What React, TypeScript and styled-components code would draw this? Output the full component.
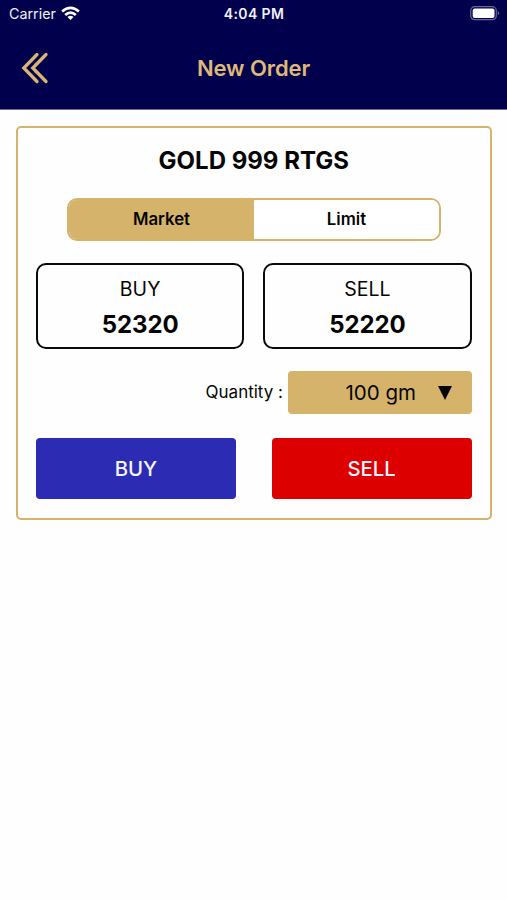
import React, { useState } from "react";
import styled, { createGlobalStyle } from "styled-components";

const GOLD = "#d6b36a";
const NAVY = "#00004c";

const GlobalStyle = createGlobalStyle`
  *, *::before, *::after { box-sizing: border-box; }
  body {
    margin: 0;
    background: #fefefe;
    color: #050505;
    font-family: Inter, "Liberation Sans", sans-serif;
  }
  button { font: inherit; color: inherit; border: 0; padding: 0; margin: 0; cursor: pointer; }
`;

const Screen = styled.div`
  min-height: 900px;
  display: flex;
  flex-direction: column;
`;

const Header = styled.header`
  height: 110px;
  background: ${NAVY};
  border-bottom: 1px solid #6c6a94;
`;

const StatusBar = styled.div`
  height: 27px;
  display: grid;
  grid-template-columns: 1fr auto 1fr;
  align-items: center;
  padding: 0 7px 0 9px;
  color: #f1f1fa;
  font-size: 14.3px;
`;

const Carrier = styled.div`
  display: flex;
  align-items: center;
  gap: 5px;
`;

const Clock = styled.div`
  font-weight: 600;
  font-size: 14px;
  letter-spacing: 0.4px;
  margin-right: 1px;
`;

const Battery = styled.div`
  display: flex;
  justify-content: flex-end;
`;

const NavBar = styled.div`
  height: 82px;
  display: grid;
  grid-template-columns: 80px 1fr 80px;
  align-items: center;
`;

const BackButton = styled.button`
  display: flex;
  width: 30px;
  margin-left: 20px;
  background: none;
`;

const Title = styled.h1`
  margin: 0;
  text-align: center;
  color: #deb979;
  font-size: 22px;
  font-weight: 600;
  letter-spacing: -0.1px;
`;

const Card = styled.main`
  margin: 16px 15px 0 16px;
  height: 394px;
  border: 2px solid ${GOLD};
  border-radius: 5px;
  padding: 0 18.5px 0 18px;
`;

const Instrument = styled.h2`
  margin: 17px 0 0;
  height: 30px;
  line-height: 31px;
  text-align: center;
  font-size: 24px;
  font-weight: 700;
  letter-spacing: 0;
`;

const Segments = styled.div`
  margin: 23px 30.5px 0 31px;
  height: 43px;
  display: grid;
  grid-template-columns: 1fr 1fr;
  border: 2px solid ${GOLD};
  border-radius: 10px;
  overflow: hidden;
`;

const Segment = styled.button<{ $active: boolean }>`
  background: ${(p) => (p.$active ? GOLD : "#fff")};
  padding-bottom: 1px;
  font-size: 16.8px;
  font-weight: 600;
`;

const Prices = styled.div`
  margin-top: 22px;
  display: grid;
  grid-template-columns: 1fr 1fr;
  gap: 19px;
`;

const PriceBox = styled.div`
  height: 86px;
  border: 2.5px solid #0a0a0a;
  border-radius: 10px;
  display: flex;
  flex-direction: column;
  align-items: center;
  padding-top: 12px;
`;

const PriceLabel = styled.span`
  font-size: 19.5px;
  line-height: 24px;
`;

const PriceValue = styled.span`
  margin-top: 9px;
  font-size: 24px;
  line-height: 30px;
  font-weight: 700;
  letter-spacing: -0.1px;
`;

const QuantityRow = styled.div`
  margin-top: 22px;
  display: flex;
  justify-content: flex-end;
  align-items: center;
  gap: 5px;
  font-size: 17px;
`;

const QuantityLabel = styled.span`
  padding-bottom: 1px;
`;

const QuantitySelect = styled.button`
  width: 183.5px;
  height: 43px;
  display: grid;
  grid-template-columns: 1fr 14px;
  column-gap: 18px;
  align-items: center;
  padding: 0 20px 0 54px;
  border-radius: 4px;
  background: ${GOLD};
  font-size: 20.5px;
  white-space: nowrap;
`;

const Actions = styled.div`
  margin-top: 24px;
  display: grid;
  grid-template-columns: 1fr 1fr;
  gap: 36px;
`;

const ActionButton = styled.button<{ $tone: string }>`
  height: 61px;
  border-radius: 4px;
  background: ${(p) => p.$tone};
  color: #f7f4ff;
  font-size: 20.3px;
  font-weight: 500;
`;

const quotes = [
  { label: "BUY", price: 52320 },
  { label: "SELL", price: 52220 },
];

function WifiIcon() {
  return (
    <svg width="19" height="15" viewBox="0 0 19 15" fill="none" stroke="#fff" strokeWidth="2.7">
      <path d="M1.1 5.5Q9.5 -1.7 17.9 5.5" />
      <path d="M4.2 9Q9.5 4.3 14.8 9" />
      <path d="M9.5 14 6.5 11Q9.5 8.6 12.5 11Z" fill="#fff" stroke="none" />
    </svg>
  );
}

function BatteryIcon() {
  return (
    <svg width="30" height="15" viewBox="0 0 30 15">
      <rect x=".7" y=".7" width="25.6" height="13" rx="4" fill="none" stroke="#68669a" strokeWidth="1.2" />
      <rect x="2.7" y="2.5" width="21.8" height="9.4" rx="2" fill="#fff" />
      <path d="M27.8 5q2.8 2.2 0 4.4Z" fill="#68669a" />
    </svg>
  );
}

function BackIcon() {
  return (
    <svg width="30" height="32" viewBox="0 0 30 32" fill="none" stroke="#d9b574" strokeWidth="3.3" strokeLinecap="round" strokeLinejoin="miter">
      <path d="M17 2.5 3.8 16 17 29.5" />
      <path d="M26 2.5 12.8 16 26 29.5" />
    </svg>
  );
}

export default function App() {
  const [mode, setMode] = useState("Market");
  return (
    <>
      <GlobalStyle />
      <Screen>
        <Header>
          <StatusBar>
            <Carrier>
              Carrier
              <WifiIcon />
            </Carrier>
            <Clock>4:04 PM</Clock>
            <Battery>
              <BatteryIcon />
            </Battery>
          </StatusBar>
          <NavBar>
            <BackButton aria-label="Back">
              <BackIcon />
            </BackButton>
            <Title>New Order</Title>
          </NavBar>
        </Header>
        <Card>
          <Instrument>GOLD 999 RTGS</Instrument>
          <Segments>
            {["Market", "Limit"].map((name) => (
              <Segment key={name} $active={mode === name} onClick={() => setMode(name)}>
                {name}
              </Segment>
            ))}
          </Segments>
          <Prices>
            {quotes.map((q) => (
              <PriceBox key={q.label}>
                <PriceLabel>{q.label}</PriceLabel>
                <PriceValue>{q.price}</PriceValue>
              </PriceBox>
            ))}
          </Prices>
          <QuantityRow>
            <QuantityLabel>Quantity :</QuantityLabel>
            <QuantitySelect>
              <span>100 gm</span>
              <svg width="14" height="14" viewBox="0 0 14 14">
                <path d="M0 0H14L7 14Z" fill="#050505" />
              </svg>
            </QuantitySelect>
          </QuantityRow>
          <Actions>
            <ActionButton $tone="#2c2bb4">BUY</ActionButton>
            <ActionButton $tone="#dc0000">SELL</ActionButton>
          </Actions>
        </Card>
      </Screen>
    </>
  );
}
